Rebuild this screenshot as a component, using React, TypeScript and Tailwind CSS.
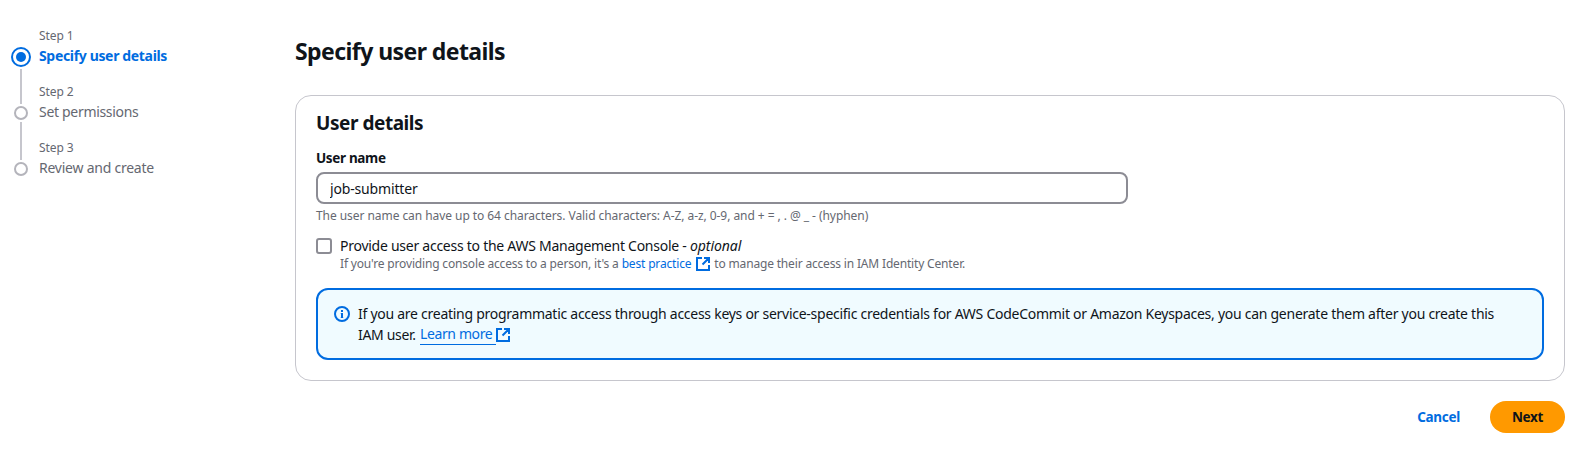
import React from 'react';

const steps = [
  { label: 'Step 1', title: 'Specify user details', active: true, spacing: 'tracking-[-0.34px]' },
  { label: 'Step 2', title: 'Set permissions', active: false, spacing: 'tracking-[-0.31px]' },
  { label: 'Step 3', title: 'Review and create', active: false, spacing: 'tracking-[-0.24px]' },
];

function ExternalIcon({ className = '' }: { className?: string }) {
  return (
    <svg viewBox="0 0 16 16" className={`inline-block size-4 fill-none stroke-[#006ce0] stroke-2 ${className}`}>
      <path d="M14 9v5H2V2h5M7.5 8.5 14 2M9 2h5v5" />
    </svg>
  );
}

function InfoIcon() {
  return (
    <svg viewBox="0 0 16 16" className="size-4 fill-none stroke-[#006ce0] stroke-2">
      <circle cx="8" cy="8" r="7" />
      <path d="M8 7v5M8 4v2" />
      <path d="M6.8 7.5H8M6.8 11.5h2.4" className="stroke-1" />
    </svg>
  );
}

function StepMarker({ active }: { active: boolean }) {
  return active ? (
    <span className="flex size-5 items-center justify-center rounded-full border-2 border-[#006ce0]">
      <span className="size-2.5 rounded-full bg-[#006ce0]" />
    </span>
  ) : (
    <span className="size-3.5 rounded-full border-2 border-[#b4b4bb]" />
  );
}

function Steps() {
  return (
    <ol className="w-[295px] shrink-0 pl-[11px] pt-[26px]">
      {steps.map((step, i) => (
        <li key={step.label} className="flex h-14 gap-2">
          <div className="flex w-5 flex-col items-center">
            <div className={step.active ? 'mt-[21px] flex' : 'mt-6 flex'}>
              <StepMarker active={step.active} />
            </div>
            {i < steps.length - 1 && <span className="mt-0.5 -mb-[22px] w-0.5 flex-1 bg-[#c6c6cd]" />}
          </div>
          <div className="whitespace-nowrap">
            <div className="text-[12px] leading-5 tracking-[-0.1px] text-[#656871]">{step.label}</div>
            <div className={`text-[14px] leading-5 ${step.spacing} ${step.active ? 'font-bold text-[#006ce0]' : 'text-[#656871]'}`}>
              {step.title}
            </div>
          </div>
        </li>
      ))}
    </ol>
  );
}

export default function App() {
  return (
    <div className="flex h-[459px] w-[1586px] overflow-hidden bg-white font-['Noto_Sans',sans-serif] text-[#0f141a]">
      <Steps />
      <main className="w-[1270px] shrink-0 whitespace-nowrap">
        <h1 className="mt-9 text-[23px] leading-[30px] font-bold tracking-[-0.57px]">Specify user details</h1>
        <section className="mt-[29px] h-[286px] rounded-2xl border border-[#c6c6cd] px-5 pt-[15px]">
          <h2 className="text-[19px] leading-6 font-bold tracking-[-0.45px]">User details</h2>
          <label htmlFor="username" className="mt-[13px] block text-[13.5px] leading-5 font-bold tracking-[-0.34px]">
            User name
          </label>
          <input
            id="username"
            defaultValue="job-submitter"
            className="mt-1 block h-8 w-[812px] rounded-lg border-2 border-[#8c8c94] px-3 text-[14px] leading-5 tracking-[-0.16px]"
          />
          <p className="mt-1 text-[12px] leading-4 tracking-[-0.06px] text-[#656871]">
            The user name can have up to 64 characters. Valid characters: A-Z, a-z, 0-9, and + = , . @ _ - (hyphen)
          </p>
          <div className="mt-3 flex gap-2">
            <span className="mt-0.5 size-4 rounded-[3px] border-2 border-[#8c8c94]" />
            <div>
              <div className="text-[14px] leading-5 tracking-[-0.26px]">
                Provide user access to the AWS Management Console - <em className="tracking-[-0.05px]">optional</em>
              </div>
              <div className="flex h-4 items-center text-[12px] leading-4 tracking-[-0.17px] text-[#656871]">
                <span className="whitespace-pre">{"If you're providing console access to a person, it's a "}</span>
                <a className="text-[#006ce0]">best practice</a>
                <ExternalIcon className="mr-[3px] ml-1" />
                <span>to manage their access in IAM Identity Center.</span>
              </div>
            </div>
          </div>
          <div className="mt-4 flex h-[72px] gap-2 rounded-xl border-2 border-[#006ce0] bg-[#f0fbff] px-4 pt-3.5">
            <div className="mt-0.5"><InfoIcon /></div>
            <div className="text-[14px] leading-5 tracking-[-0.267px]">
              <div>
                If you are creating programmatic access through access keys or service-specific credentials for AWS CodeCommit or Amazon Keyspaces, you can generate them after you create this
              </div>
              <div className="flex items-center">
                <span className="w-[62px] tracking-[-0.32px]">IAM user.</span>
                <a className="w-[76px] border-b border-[#006ce0] leading-5 tracking-[-0.38px] text-[#006ce0]">Learn more</a>
                <ExternalIcon className="-ml-px" />
              </div>
            </div>
          </div>
        </section>
        <div className="mt-5 flex justify-end text-[13.5px] leading-5 font-bold tracking-[-0.3px]">
          <button className="mr-[30px] h-8 text-[#006ce0]">Cancel</button>
          <button className="h-8 w-[75px] rounded-full bg-[#ff9900]">Next</button>
        </div>
      </main>
    </div>
  );
}
